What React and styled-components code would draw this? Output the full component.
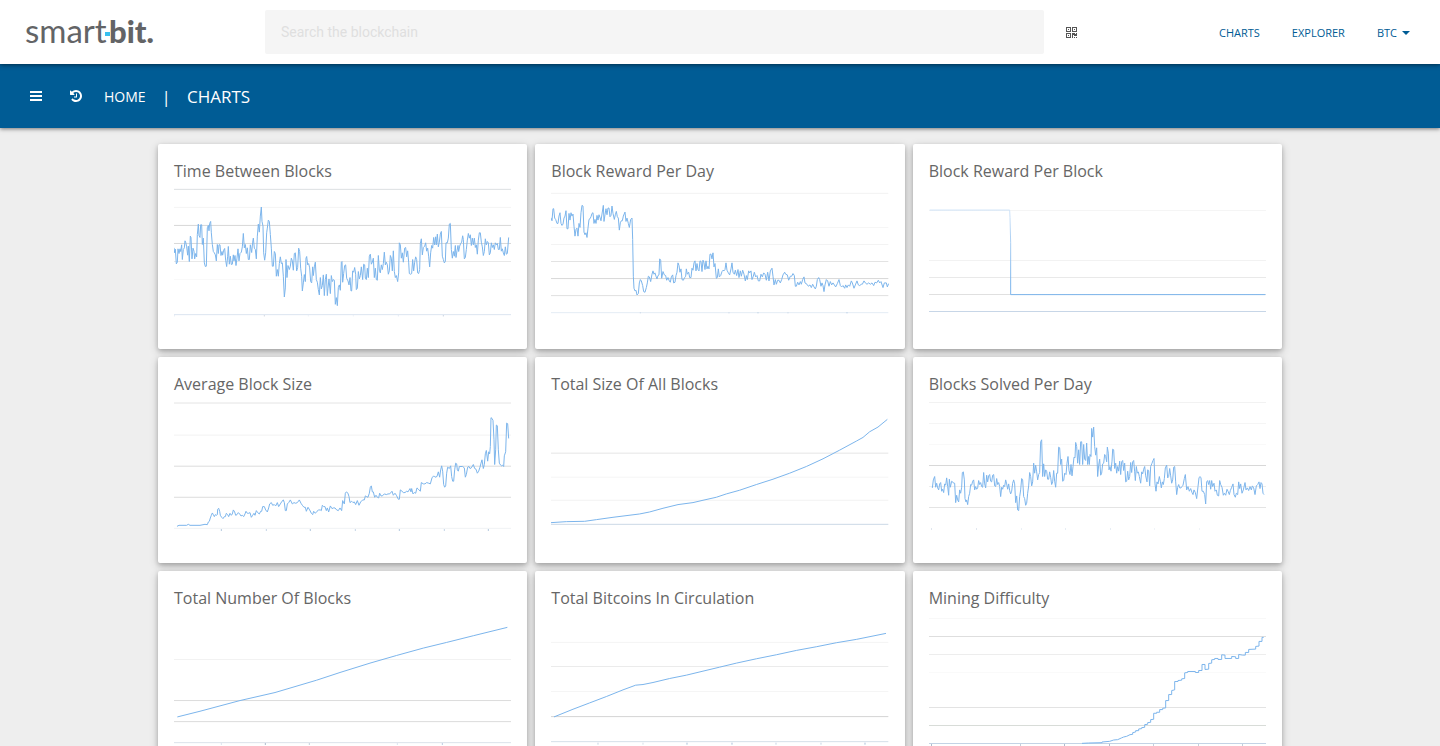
import React from "react";
import styled, { createGlobalStyle } from "styled-components";

const GlobalStyle = createGlobalStyle`
  * { box-sizing: border-box; }
  body {
    margin: 0;
    background: #eee;
    color: #666;
    font-family: "Open Sans", "Noto Sans", sans-serif;
  }
`;

const Header = styled.header`
  position: relative;
  z-index: 2;
  display: flex;
  align-items: center;
  height: 64px;
  padding-left: 24px;
  background: #fff;
  box-shadow: 0 1px 4px rgba(0, 0, 0, 0.5);
`;

const LogoLink = styled.a`
  flex: 0 0 241px;
  height: 44px;
`;

const LogoText = styled.text`
  font-family: Lato, sans-serif;
  font-size: ${(p) => (p.$bold ? 31 : 33)}px;
  font-weight: ${(p) => (p.$bold ? 900 : 400)};
  fill: #636466;
`;

const Search = styled.input`
  flex: 1;
  min-width: 0;
  height: 44px;
  padding: 0 16px;
  border: 0;
  border-radius: 2px;
  background: #f5f5f5;
  font: 14px Roboto, sans-serif;
  color: #666;
  &::placeholder { color: #dfdfdf; opacity: 1; }
`;

const HeaderSide = styled.div`
  display: flex;
  flex: 0 0 396px;
  align-items: center;
  justify-content: space-between;
  padding: 0 30px 0 22px;
`;

const PlainButton = styled.button`
  display: flex;
  align-items: center;
  gap: 5px;
  padding: 0;
  border: 0;
  background: none;
  color: inherit;
  font: inherit;
  cursor: pointer;
`;

const TopNav = styled.nav`
  display: flex;
  gap: 32px;
  padding-top: 2px;
  color: #005c95;
  font-size: 11px;
  line-height: 16px;
`;

const NavLink = styled.a`
  color: inherit;
  text-decoration: none;
`;

const Caret = styled.span`
  border: 4px solid transparent;
  border-top-color: currentColor;
  border-bottom: 0;
`;

const Bar = styled.div`
  display: flex;
  align-items: center;
  height: 64px;
  padding: 0 30px;
  background: #005c95;
  color: #fff;
  box-shadow: 0 1px 4px rgba(0, 0, 0, 0.5);
`;

const BarTools = styled.div`
  display: flex;
  gap: 28px;
  margin-right: 22px;
`;

const Crumbs = styled.nav`
  display: flex;
  align-items: center;
  gap: 16px;
  font-size: 14px;
`;

const Current = styled.h1`
  margin: 0;
  font-size: 17px;
  font-weight: 400;
`;

const Divider = styled.span`
  font-size: 17px;
`;

const Grid = styled.main`
  display: grid;
  grid-template-columns: repeat(3, 1fr);
  gap: 8px;
  max-width: 1124px;
  margin: 16px auto;
`;

const Card = styled.article`
  padding: 16px;
  border-radius: 2px;
  background: #fff;
  box-shadow: 0 2px 4px rgba(0, 0, 0, 0.2), 0 3px 10px rgba(0, 0, 0, 0.19);
`;

const CardTitle = styled.h2`
  margin: 0 0 2px;
  font-size: 16px;
  font-weight: 400;
  line-height: 22px;
`;

const Plot = styled.svg`
  display: block;
  width: 100%;
  aspect-ratio: 70 / 31;
`;

const Rule = styled.line`
  stroke: ${(p) => p.$tone};
  stroke-width: 1px;
  vector-effect: non-scaling-stroke;
  shape-rendering: crispEdges;
`;

const Series = styled.polyline`
  fill: none;
  stroke: #7cb5ec;
  stroke-width: 1px;
  stroke-linejoin: round;
  vector-effect: non-scaling-stroke;
`;

/* Each plot: origin of its coordinates, grid rules [y, colour],
   axis ticks [x, colour] below tickY, and the series as x,y pairs. */
const charts = [
  {
    title: "Time Between Blocks",
    origin: [72, 144],
    rules: [[160, "#dcdfe2"], [214, "#f4f4f4"], [268, "#d8d8d8"], [322, "#d8d8d8"], [376, "#e8e8e8"], [430, "#f9f9f9"], [535, "#dbe4f0"]],
    tickY: 537,
    tickLength: 3,
    ticks: [[73, "#dbe4f0"], [343, "#c0c8d4"], [475, "#e4ebf4"], [610, "#e4ebf4"], [745, "#d8e2f0"], [880, "#b4c2d4"]],
    points:
      "72,335 74,350 76,339 79,383 82,378 84,338 87,352 90,338 92,346 95,326 97,370 100,340 103,335 105,314 107,318 110,332 113,357 115,330 118,376 121,300 123,304 126,368 129,336 132,345 134,368 137,352 140,362 142,295 145,264 147,298 150,304 152,266 155,266 157,325 160,306 163,380 166,391 169,390 172,275 175,268 177,284 179,262 182,256 184,290 187,325 190,346 193,350 196,356 199,374 202,325 205,352 207,326 210,326 213,358 216,346 218,357 221,342 224,337 227,372 230,391 233,360 235,331 238,384 241,360 244,385 247,384 250,356 252,374 255,358 258,388 261,366 264,338 267,374 270,352 274,348 277,332 280,292 283,335 286,325 289,352 292,335 295,370 298,370 301,326 305,349 308,318 310,306 313,336 316,340 319,368 322,300 325,264 328,288 331,240 334,213 336,256 339,270 341,350 344,372 347,350 350,290 352,276 355,252 358,256 361,295 364,336 367,390 370,390 373,346 376,352 379,420 382,400 385,420 388,382 391,362 394,382 397,380 400,420 403,482 406,455 408,370 411,424 414,388 418,400 421,390 424,366 427,374 430,402 433,352 436,350 440,404 443,394 446,336 449,346 452,396 455,420 457,464 460,440 463,415 466,436 468,366 470,361 473,386 476,382 479,395 482,436 485,440 488,392 490,418 493,392 496,378 499,430 502,438 505,460 508,476 511,424 514,458 517,448 520,416 523,478 526,430 529,414 532,478 534,456 537,428 541,472 544,418 547,436 550,430 553,432 556,504 559,484 562,508 565,454 568,446 571,462 574,378 576,376 578,438 581,412 584,388 587,386 590,426 594,434 597,446 600,424 603,464 605,464 608,404 611,408 614,394 617,414 619,460 622,456 625,406 628,428 631,418 634,392 638,430 641,384 644,386 646,426 649,430 652,396 655,424 658,360 661,354 664,384 667,378 670,366 673,424 676,396 679,430 682,432 685,358 688,402 691,410 694,386 697,400 700,382 703,348 706,386 709,378 712,386 715,414 718,404 721,358 724,366 727,404 730,344 733,406 736,424 739,418 743,436 746,410 748,320 751,326 754,366 757,350 760,378 764,336 767,334 770,362 773,344 776,378 778,412 782,414 785,412 788,370 791,404 794,378 797,362 800,370 803,410 806,412 809,400 811,322 814,308 817,356 820,334 824,330 827,320 830,345 833,336 836,360 839,392 842,350 845,328 848,336 851,304 854,326 857,302 859,326 862,294 865,332 868,318 871,294 874,286 877,360 880,370 883,380 886,376 888,320 892,320 895,306 898,264 901,262 904,340 907,366 910,346 913,360 916,328 918,364 921,344 924,328 926,346 929,330 932,322 935,318 938,299 940,310 943,368 946,364 949,340 952,312 955,292 958,306 961,296 964,328 967,306 970,326 973,306 976,334 979,326 982,354 985,312 988,290 991,290 994,318 997,332 1000,358 1003,346 1006,308 1009,326 1012,316 1015,320 1018,356 1021,350 1024,320 1027,334 1030,326 1033,340 1036,320 1039,326 1042,322 1045,340 1048,340 1051,304 1054,345 1057,338 1060,350 1063,358 1066,332 1069,354 1072,352 1076,304",
  },
  {
    title: "Block Reward Per Day",
    origin: [64, 144],
    rules: [[172, "#f2f2f2"], [274, "#f6f6f6"], [325, "#f3f3f3"], [376, "#e3e3e3"], [427, "#d8d8d8"], [478, "#e0e0e0"], [529, "#e4edf5"]],
    tickY: 528,
    tickLength: 3,
    ticks: [[332, "#c5d4e5"], [598, "#c5d4e5"], [685, "#b4c8de"], [775, "#c5d4e5"], [952, "#a9c4e0"]],
    points:
      "64,245 67,254 70,218 72,218 75,246 78,250 82,262 85,262 88,240 91,230 94,262 97,268 100,264 103,246 106,240 109,224 112,278 115,278 118,232 121,252 124,230 127,240 130,234 133,270 136,300 139,280 142,276 145,300 148,262 151,274 154,230 157,208 160,210 163,288 166,296 169,290 172,304 175,276 178,250 181,248 184,242 187,232 190,230 193,262 196,250 199,262 202,238 205,252 208,236 211,244 214,254 217,234 221,208 223,256 226,236 229,218 232,236 235,216 238,216 241,242 244,238 247,210 250,232 254,250 257,236 260,226 263,242 266,246 269,282 272,260 275,254 278,254 281,240 286,228 289,256 292,246 296,262 299,274 303,250 307,246 309,310 311,420 313,456 316,464 319,462 322,476 326,472 329,440 332,430 335,434 339,448 342,466 346,468 350,454 353,440 356,420 359,422 363,436 367,414 370,404 373,414 376,410 379,420 382,428 385,418 388,416 390,368 393,372 396,426 400,406 404,416 408,418 411,432 415,424 419,434 422,438 425,422 429,416 432,440 436,438 439,418 442,408 445,380 448,388 451,408 454,398 457,430 461,432 465,424 468,420 470,398 473,414 477,408 480,424 484,424 487,396 490,402 493,380 496,374 499,404 502,382 505,400 508,404 511,374 514,376 517,406 520,372 523,380 526,400 529,374 532,398 535,390 538,398 541,354 544,354 547,368 550,350 553,392 556,382 560,426 563,424 566,398 569,422 573,418 577,406 580,402 583,404 586,400 589,380 592,402 596,410 600,416 604,398 607,380 610,408 614,414 617,402 621,418 625,400 628,424 632,404 635,420 639,402 643,414 647,434 650,418 653,430 657,404 660,410 664,404 667,430 671,420 674,408 678,422 682,418 686,434 690,434 694,414 698,422 702,410 706,414 710,432 714,408 718,434 722,404 727,396 730,420 733,446 737,430 740,444 744,432 748,432 752,440 756,430 760,416 765,408 768,414 773,416 777,432 782,420 786,420 790,412 794,418 797,450 800,450 804,438 808,446 812,436 815,444 819,430 823,422 826,440 832,444 836,450 841,446 845,454 849,444 853,452 857,458 860,450 863,430 867,424 870,430 874,450 877,440 880,448 883,466 886,446 890,430 894,434 898,450 902,436 906,446 910,440 914,446 918,452 923,442 928,430 932,448 936,452 940,448 945,456 948,446 952,454 956,446 960,450 965,434 968,440 973,456 977,446 982,434 986,446 990,448 995,444 998,444 1003,434 1007,440 1012,444 1017,440 1022,444 1027,440 1032,448 1036,438 1041,440 1046,432 1050,440 1054,436 1060,454 1064,440 1070,440 1073,452 1077,442",
  },
  {
    title: "Block Reward Per Block",
    origin: [71, 144],
    rules: [[223, "#f5f5f5"], [373, "#f2f2f2"], [424, "#e9e9e9"], [475, "#e0e0e0"], [526, "#c7d6e7"]],
    tickY: 525,
    ticks: [],
    fade: true,
    points: "73,222 313,222 314,244 316,320 316,475 1080,475",
  },
  {
    title: "Average Block Size",
    origin: [72, 142],
    rules: [[160, "#e4e4e4"], [256, "#f2f2f2"], [349, "#dcdcdc"], [442, "#dcdcdc"], [535, "#f0f2f4"]],
    tickY: 537,
    ticks: [[214, "#b4c8de"], [349, "#c5d4e5"], [481, "#b4c8de"], [616, "#c5d4e5"], [748, "#b4c8de"], [883, "#c5d4e5"], [1015, "#b4c8de"]],
    points:
      "81,529 87,526 110,526 115,523 120,526 150,526 165,523 172,524 175,516 178,514 181,504 184,496 187,489 190,494 193,500 196,494 199,496 202,494 203,478 206,475 209,484 211,496 215,502 219,506 223,500 226,500 229,490 233,494 236,500 240,490 244,496 247,492 250,480 254,486 257,496 261,494 265,488 269,492 273,498 277,496 281,500 285,492 288,484 292,490 296,490 300,488 304,502 308,496 312,490 315,496 319,482 323,488 328,492 332,484 335,484 338,470 343,470 347,480 352,486 356,474 359,462 364,458 368,466 373,464 377,468 382,458 386,470 391,462 396,454 400,450 403,458 406,482 409,482 412,462 416,458 421,450 427,462 432,458 437,460 442,458 448,450 453,460 457,466 462,472 466,472 469,484 474,472 479,480 484,490 488,494 491,484 496,490 501,484 506,480 511,480 514,482 517,466 521,470 525,470 529,482 532,474 536,486 541,468 546,476 550,474 555,474 560,480 565,482 570,474 575,482 578,452 583,462 586,430 589,426 594,430 597,440 600,458 605,454 609,458 613,456 617,464 622,452 627,466 632,456 638,450 643,450 646,438 650,440 654,442 658,430 661,412 664,408 667,426 670,426 674,442 678,436 682,442 686,444 689,430 693,438 697,438 703,432 709,434 714,432 719,432 726,424 730,436 735,430 739,436 745,448 748,448 751,420 756,424 760,428 765,428 770,424 774,426 780,416 783,426 785,416 789,432 793,428 797,430 801,414 805,418 811,424 814,398 820,402 825,402 830,398 836,400 841,402 846,384 851,378 855,382 861,380 865,366 869,382 872,360 875,348 878,364 881,404 884,412 887,408 890,370 893,352 898,356 902,348 905,380 908,394 911,394 914,360 917,340 920,342 922,360 925,364 928,350 933,350 938,350 943,354 946,382 949,374 953,352 957,350 960,356 964,354 970,344 974,356 978,358 982,370 986,364 990,352 993,340 996,330 1000,356 1003,344 1006,312 1009,302 1013,334 1016,306 1019,312 1021,290 1023,204 1026,206 1029,212 1032,270 1034,344 1037,300 1039,226 1042,228 1045,300 1048,340 1052,346 1055,348 1058,346 1061,350 1063,318 1067,306 1070,220 1073,222 1076,266",
  },
  {
    title: "Total Size Of All Blocks",
    origin: [64, 142],
    rules: [[310, "#e5e5e5"], [382, "#f5f5f5"], [451, "#f2f2f2"], [523, "#cbd8e6"]],
    tickY: 523,
    ticks: [],
    points:
      "64,518 110,515 165,514 200,509 250,502 330,492 360,486 400,475 445,464 490,458 520,451 560,442 590,432 630,421 680,404 730,388 780,370 830,350 880,327 930,301 980,274 1000,263 1020,246 1045,232 1073,209",
  },
  {
    title: "Blocks Solved Per Day",
    origin: [71, 142],
    rules: [[157, "#f2f2f2"], [220, "#f5f5f5"], [283, "#f9f9f9"], [346, "#d8d8d8"], [409, "#ededed"], [472, "#e4e4e4"]],
    tickY: 534,
    ticks: [[79, "#dfe5ed"], [214, "#e1e7ef"], [349, "#eaf0f6"], [481, "#e7edf4"], [616, "#e7edf4"], [748, "#f0f4f8"], [883, "#f0f4f8"]],
    points:
      "81,414 84,390 88,380 91,412 94,400 97,414 100,420 103,402 106,398 109,424 112,418 115,428 118,402 121,406 124,384 127,410 130,436 132,388 135,412 139,394 142,396 145,400 148,400 151,458 154,436 157,450 160,456 163,420 166,430 169,412 171,368 174,366 177,390 179,446 182,456 184,450 187,464 190,440 193,430 196,404 199,406 202,394 205,390 208,420 211,410 214,418 217,414 220,392 223,404 226,398 229,410 232,412 235,368 238,402 241,414 244,376 247,396 250,378 253,374 256,394 259,396 262,376 265,374 268,408 271,410 274,386 277,404 280,398 283,410 286,440 289,412 292,418 295,406 298,410 301,390 304,402 307,418 310,402 313,422 316,432 319,424 322,400 325,390 328,402 331,458 334,438 337,480 340,482 343,440 346,420 349,386 352,390 355,440 358,446 361,466 364,460 367,430 370,408 373,368 376,380 379,408 382,396 385,340 388,370 391,346 394,366 397,390 400,374 403,368 406,276 409,270 412,380 415,342 418,380 421,360 424,364 427,388 430,388 433,366 436,382 439,404 442,396 445,362 448,394 451,412 454,370 457,370 460,292 463,294 466,344 469,328 472,394 475,392 478,370 482,374 485,340 488,320 491,362 494,374 497,344 500,378 503,350 506,322 509,324 511,278 514,290 517,340 520,300 523,344 526,276 529,276 532,344 535,284 538,328 541,332 544,280 547,344 550,320 552,344 554,314 557,320 559,236 562,262 565,232 568,290 571,316 574,294 577,380 580,346 583,328 586,376 589,370 592,342 595,340 598,314 601,320 604,336 606,292 609,310 611,360 614,350 617,364 620,334 622,298 625,300 628,356 631,340 634,370 637,350 640,364 643,334 646,374 649,336 652,332 655,362 658,340 661,396 664,394 667,364 670,390 673,380 676,338 679,368 682,336 685,332 688,366 690,392 693,350 696,370 699,366 702,380 706,400 709,366 712,372 715,358 718,350 721,378 725,396 727,360 730,362 733,408 736,350 740,340 743,332 746,326 749,402 752,424 755,396 758,402 762,380 765,394 768,414 771,396 774,404 777,386 780,354 784,346 787,384 790,380 793,356 796,378 799,400 802,390 805,352 808,350 811,396 814,434 817,412 820,404 823,414 827,414 830,410 833,406 837,386 840,374 844,420 848,410 852,424 856,416 860,428 863,434 866,420 870,428 874,446 878,410 881,384 884,380 887,384 890,424 894,424 898,434 901,462 904,396 907,392 910,404 913,392 916,418 919,392 922,410 926,400 929,424 933,420 936,436 940,438 943,392 946,404 950,412 954,436 957,430 961,436 965,418 968,424 972,434 975,422 979,412 983,402 986,434 990,442 993,430 997,434 1000,396 1003,416 1006,402 1010,430 1014,420 1019,398 1022,420 1026,414 1030,422 1034,410 1038,420 1041,408 1045,414 1049,434 1053,408 1057,404 1061,396 1064,416 1067,398 1070,402 1073,430 1076,434",
  },
  {
    title: "Total Number Of Blocks",
    origin: [72, 153],
    rules: [[298, "#f2f2f2"], [421, "#dcdcdc"], [484, "#dcdcdc"], [547, "#dbe2ea"]],
    tickY: 548,
    ticks: [[214, "#dbe4f0"], [346, "#aebccd"], [478, "#c5cfdb"], [742, "#dbe4f0"], [877, "#bccbe2"]],
    points: "82,470 150,453 210,437 270,421 375,397 500,360 570,337 660,309 740,286 820,264 890,247 970,227 1072,202",
  },
  {
    title: "Total Bitcoins In Circulation",
    origin: [64, 153],
    rules: [[247, "#f5f5f5"], [319, "#ebebeb"], [394, "#f5f5f5"], [469, "#d4d4d4"], [544, "#d5dfe9"]],
    tickY: 547,
    ticks: [[205, "#c5d4e5"], [340, "#d5dfe9"], [472, "#a9c0da"], [607, "#a9c0da"], [739, "#c5d4e5"], [874, "#c5d4e5"], [1006, "#a9c0da"]],
    points: "73,470 130,447 180,428 230,409 280,389 318,375 340,373 370,367 420,355 470,345 520,333 570,321 620,309 680,296 740,284 800,271 860,260 920,248 980,238 1069,220",
  },
  {
    title: "Mining Difficulty",
    origin: [71, 153],
    rules: [[176, "#f8f8f8"], [229, "#dedede"], [283, "#ededed"], [337, "#fafafa"], [442, "#e3e3e3"], [496, "#d8dcd8"], [550, "#c3d3e5"]],
    tickY: 551,
    ticks: [[79, "#aebccd"], [346, "#c5cfdb"], [478, "#aebccd"], [613, "#aebccd"], [745, "#c5cfdb"], [880, "#c5cfdb"], [1012, "#c5cfdb"]],
    points:
      "530,549 550,548 590,547 590,545 613,543 625,539 637,538 648,533 655,530 664,528 674,523 682,522 682,517 691,515 691,511 700,511 700,506 709,505 709,502 718,501 718,493 727,492 727,487 736,486 736,478 745,477 745,459 754,459 754,456 763,456 763,448 772,448 772,444 781,443 781,421 790,421 790,403 799,403 799,391 808,389 808,364 818,364 818,361 829,360 829,356 838,355 838,338 847,337 847,334 870,334 870,337 880,337 880,331 890,331 890,313 899,313 899,328 910,327 910,310 919,309 919,299 928,298 928,295 938,295 938,298 949,298 949,284 959,285 959,295 979,295 979,289 991,290 991,295 1000,295 1000,283 1012,285 1020,285 1020,277 1030,277 1030,268 1051,267 1051,259 1061,258 1061,244 1070,244 1070,232 1075,232",
  },
];

function Logo() {
  return (
    <svg width="140" height="44" viewBox="0 0 140 44" role="img" aria-label="smartbit.">
      <LogoText x="1" y="33">smart</LogoText>
      <LogoText x="85" y="33" $bold>bit.</LogoText>
      <rect x="81" y="22" width="5" height="4" fill="#38c0f0" />
    </svg>
  );
}

function QrIcon() {
  return (
    <svg width="11" height="11" viewBox="0 0 11 11" fill="#555" shapeRendering="crispEdges" aria-hidden="true">
      <path
        fillRule="evenodd"
        d="M0 0h5v5h-5zM1 1v3h3v-3zM2 2h1v1h-1zM6 0h5v5h-5zM7 1v3h3v-3zM8 2h1v1h-1zM0 6h5v5h-5zM1 7v3h3v-3zM2 8h1v1h-1zM11 6v3h-3v-1h-1v3h-1v-5h3v1h1v-1zM8 10h1v1h-1zM10 10h1v1h-1z"
      />
    </svg>
  );
}

function MenuIcon() {
  return (
    <svg width="12" height="10" viewBox="0 0 12 10" fill="currentColor" aria-hidden="true">
      <path d="M0 0h12v2H0zM0 4h12v2H0zM0 8h12v2H0z" />
    </svg>
  );
}

function HistoryIcon() {
  return (
    <svg width="12" height="12" viewBox="0 -128 1536 1536" fill="currentColor" aria-hidden="true">
      <path d="M1536 640q0 156-61 298t-164 245-245 164-298 61q-172 0-327-72.5t-264-204.5q-7-10-6.500-22.500t8.500-20.500l137-138q10-9 25-9 16 2 23 12 73 95 179 147t225 52q104 0 198.500-40.500t163.500-109.500 109.500-163.500 40.500-198.500-40.500-198.500-109.500-163.500-163.500-109.500-198.500-40.500q-98 0-188 35.500t-160 101.500l137 138q31 30 14 69-17 40-59 40h-448q-26 0-45-19t-19-45v-448q0-42 40-59 39-17 69 14l130 129q107-101 244.500-156.500t284.500-55.500q156 0 298 61t245 164 164 245 61 298zM896 352v448q0 14-9 23t-23 9h-320q-14 0-23-9t-9-23v-64q0-14 9-23t23-9h224v-352q0-14 9-23t23-9h64q14 0 23 9t9 23z" />
    </svg>
  );
}

function Chart({ title, origin, rules, ticks, tickY, tickLength = 6, points, fade }) {
  const [x, y] = origin;
  return (
    <Plot viewBox={`${x} ${y} 1012 447`} preserveAspectRatio="none" role="img" aria-label={title}>
      {fade && (
        <linearGradient id="fade" gradientUnits="userSpaceOnUse" x1="0" y1="222" x2="0" y2="440">
          <stop offset="0" stopColor="#cfe3f8" />
          <stop offset="1" stopColor="#7cb5ec" />
        </linearGradient>
      )}
      {rules.map(([ry, tone]) => (
        <Rule key={ry} $tone={tone} x1={x} x2={x + 1012} y1={ry} y2={ry} />
      ))}
      {ticks.map(([tx, tone]) => (
        <Rule key={tx} $tone={tone} x1={tx} x2={tx} y1={tickY} y2={tickY + tickLength} />
      ))}
      <Series points={points} style={fade ? { stroke: "url(#fade)" } : undefined} />
    </Plot>
  );
}

export default function App() {
  return (
    <>
      <GlobalStyle />
      <Header>
        <LogoLink href="#home" aria-label="smartbit home">
          <Logo />
        </LogoLink>
        <Search type="search" placeholder="Search the blockchain" aria-label="Search the blockchain" />
        <HeaderSide>
          <PlainButton type="button" aria-label="Scan QR code">
            <QrIcon />
          </PlainButton>
          <TopNav>
            <NavLink href="#charts">CHARTS</NavLink>
            <NavLink href="#explorer">EXPLORER</NavLink>
            <PlainButton type="button">
              BTC <Caret />
            </PlainButton>
          </TopNav>
        </HeaderSide>
      </Header>
      <Bar>
        <BarTools>
          <PlainButton type="button" aria-label="Menu">
            <MenuIcon />
          </PlainButton>
          <PlainButton type="button" aria-label="History">
            <HistoryIcon />
          </PlainButton>
        </BarTools>
        <Crumbs>
          <NavLink href="#home">HOME</NavLink>
          <Divider>|</Divider>
          <Current>CHARTS</Current>
        </Crumbs>
      </Bar>
      <Grid>
        {charts.map((chart) => (
          <Card key={chart.title}>
            <CardTitle>{chart.title}</CardTitle>
            <Chart {...chart} />
          </Card>
        ))}
      </Grid>
    </>
  );
}
